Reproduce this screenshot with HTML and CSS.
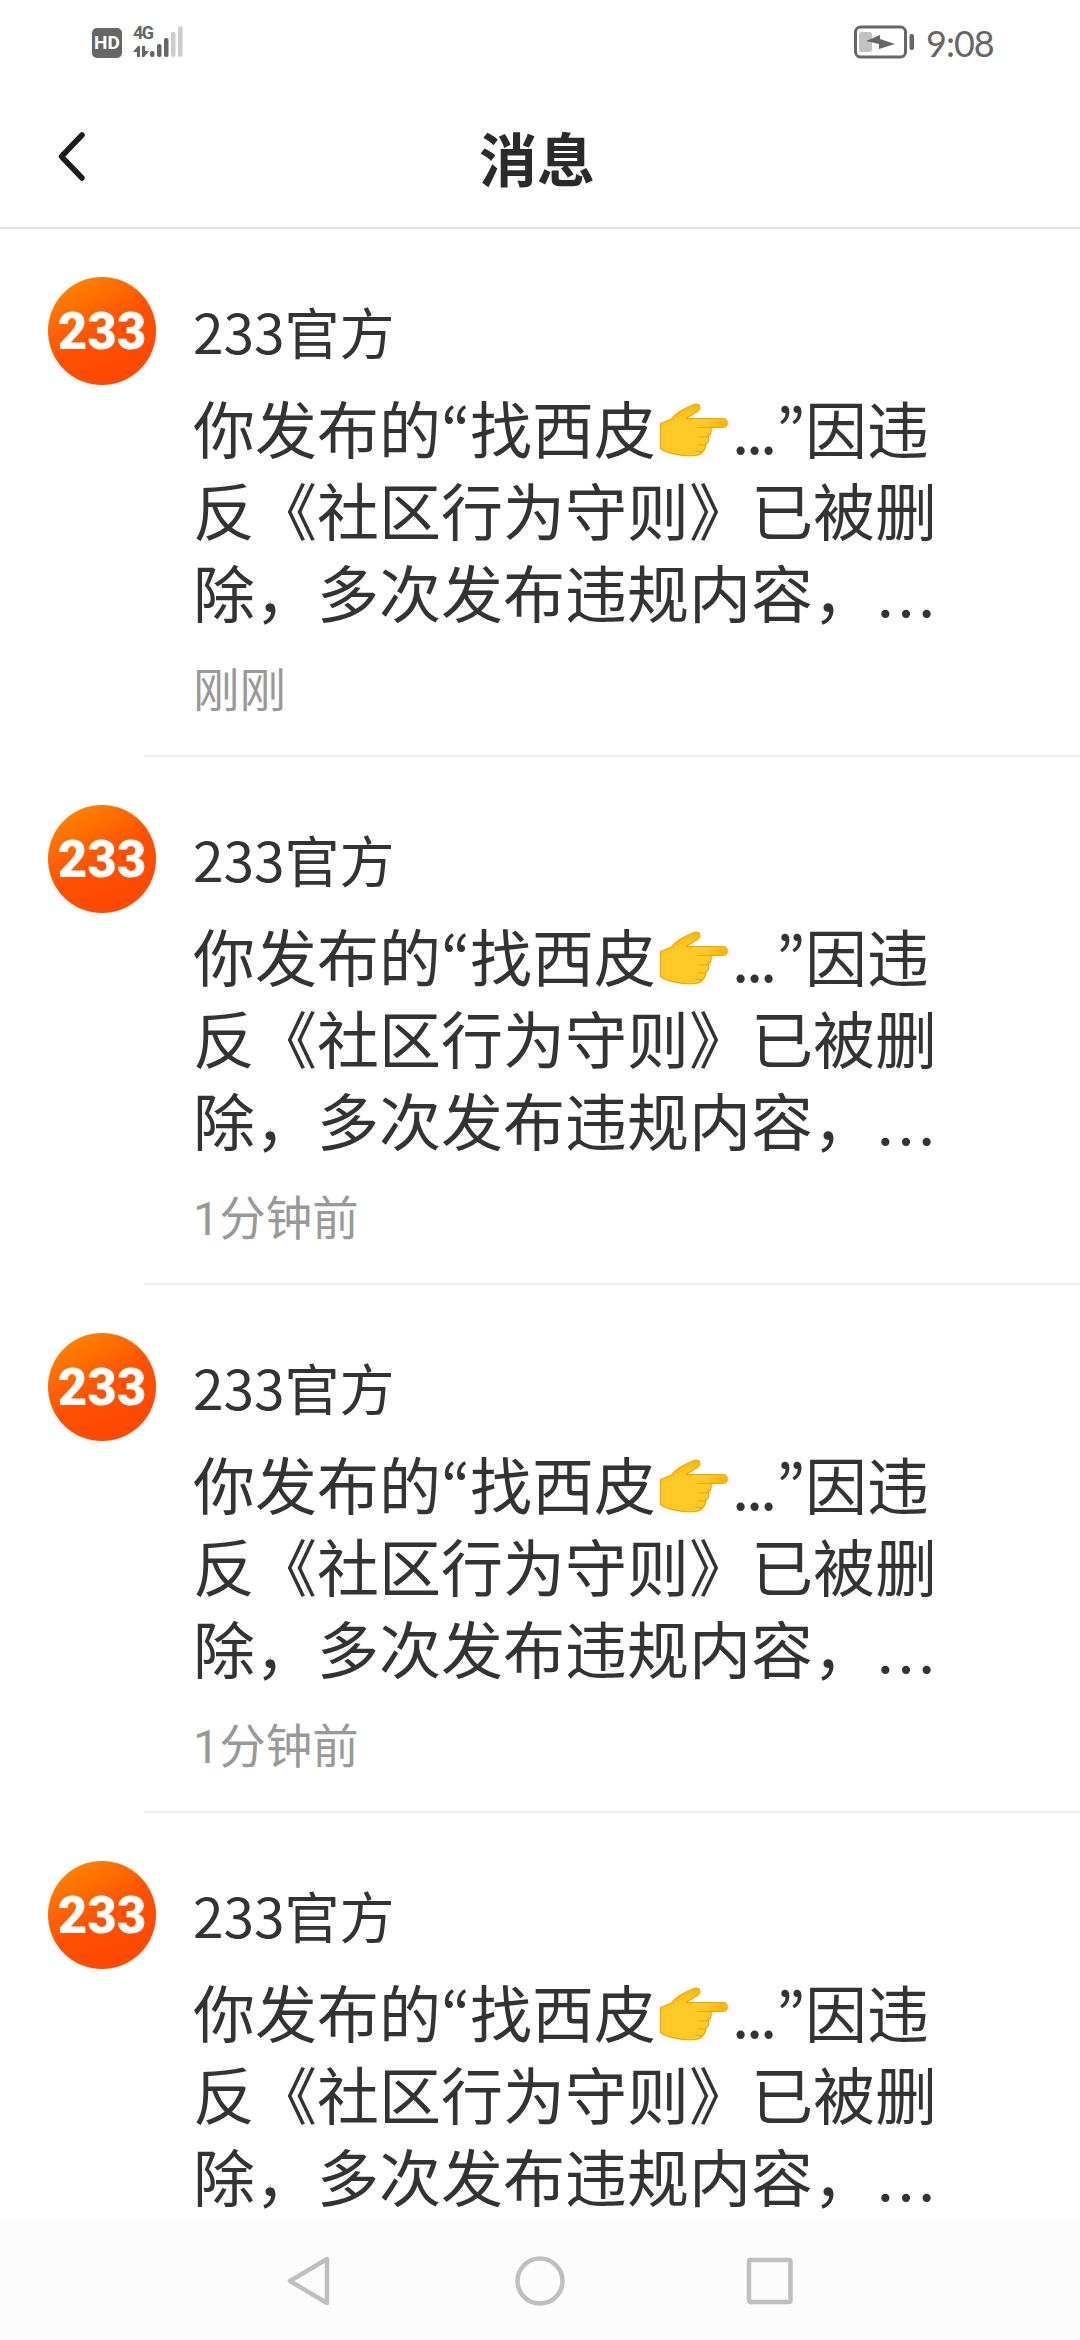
FILE: index.html
```html
<!DOCTYPE html>
<html lang="zh-CN">
<head>
<meta charset="utf-8">
<title>消息</title>
<link rel="stylesheet" href="styles.css">
</head>
<body>
<svg width="0" height="0" class="defs">
  <defs>
    <linearGradient id="skin" x1="0" y1="0" x2="0.3" y2="1"><stop offset="0" stop-color="#ffb300"/><stop offset="0.45" stop-color="#ffc928"/><stop offset="1" stop-color="#ffca28"/></linearGradient>
    <linearGradient id="finger" x1="0" y1="0" x2="1" y2="0"><stop offset="0.5" stop-color="#ffb300" stop-opacity="0"/><stop offset="1" stop-color="#ffb300"/></linearGradient>
    <symbol id="hand" viewBox="0 0 70 54">
      <path d="M1.5 20.5 L12 16.5 C18 9 27 4.500 36 1.300 C41 .2 42.500 6 38.500 8.500 L27 15.500 H63.500 C69.800 15.500 69.800 24.500 63.500 24.500 H52 C52.500 28 51.500 31.500 49.500 33 C50 37 48.500 40.500 46.500 41.500 C47 45 45 48 43.500 48.500 C42 52 39 52.500 35 52.500 C24 53.500 9 51 1.500 45.500 Z" fill="url(#skin)" stroke="#eda600" stroke-width="1.200" stroke-linejoin="round"/>
      <path d="M27 16.100 H63.500 C69 16.100 69 23.900 63.500 23.900 H40 Z" fill="url(#finger)"/>
      <path d="M40 24.500 H53 M40 33.500 Q46 35 50 32.500 M39 41.500 Q44 43 47 41 M37 48 Q41 49.500 44 48" fill="none" stroke="#eda600" stroke-width="1.200" stroke-linecap="round"/>
    </symbol>
  </defs>
</svg>
<div class="screen">
  <header class="status">
    <div class="status-left">
      <span class="hd">HD</span>
      <div class="signal">
        <span class="net">4G</span>
        <svg class="bars" width="52" height="34" viewBox="0 0 52 34">
          <g fill="#666"><path d="M0 27 L5 21 H7 V32 H4 V27 Z"/><path d="M9 21 H12 V26 H16 L11 32 H9 Z"/>
          <rect x="17" y="26" width="4.500" height="6" rx="2"/><rect x="24" y="19" width="4.500" height="13" rx="2"/><rect x="31" y="13" width="4.500" height="19" rx="2"/></g>
          <g fill="#ccc"><rect x="38" y="7" width="4.500" height="25" rx="2"/><rect x="45" y="1.500" width="4.500" height="30.500" rx="2"/></g>
        </svg>
      </div>
    </div>
    <div class="status-right">
      <svg width="61" height="34" viewBox="0 0 61 34">
        <rect x="1.500" y="2" width="50" height="30" rx="5" fill="none" stroke="#666" stroke-width="3"/>
        <rect x="5" y="7" width="13" height="20" rx="2.500" fill="#c2c2c2"/>
        <path d="M12 16 L26 10 V14 L41 19 L25 24 V19 Z" fill="#666"/>
        <rect x="55.500" y="9" width="4.500" height="16" rx="2" fill="#666"/>
      </svg>
      <span class="clock">9:08</span>
    </div>
  </header>
  <nav class="titlebar">
    <svg class="back" width="32" height="54" viewBox="0 0 32 54"><path d="M26 4 L5.500 25.500 L26 47" fill="none" stroke="#1c1c1c" stroke-width="5.500" stroke-linecap="round" stroke-linejoin="round"/></svg>
    <h1 class="title">消息</h1>
  </nav>
  <main class="list">
    <article class="item">
      <div class="avatar"><span class="logo">233</span></div>
      <div class="content">
        <div class="name">233官方</div>
        <p class="body">你发布的<span class="quote">“</span>找西皮<svg class="emoji" role="img" aria-label="👉"><use href="#hand"/></svg><span class="dots">...</span><span class="quote">”</span>因违<br>反《社区行为守则》已被删<br>除，多次发布违规内容，<span class="more">…</span></p>
        <time class="time">刚刚</time>
      </div>
    </article>
    <article class="item">
      <div class="avatar"><span class="logo">233</span></div>
      <div class="content">
        <div class="name">233官方</div>
        <p class="body">你发布的<span class="quote">“</span>找西皮<svg class="emoji" role="img" aria-label="👉"><use href="#hand"/></svg><span class="dots">...</span><span class="quote">”</span>因违<br>反《社区行为守则》已被删<br>除，多次发布违规内容，<span class="more">…</span></p>
        <time class="time"><span class="num">1</span>分钟前</time>
      </div>
    </article>
    <article class="item">
      <div class="avatar"><span class="logo">233</span></div>
      <div class="content">
        <div class="name">233官方</div>
        <p class="body">你发布的<span class="quote">“</span>找西皮<svg class="emoji" role="img" aria-label="👉"><use href="#hand"/></svg><span class="dots">...</span><span class="quote">”</span>因违<br>反《社区行为守则》已被删<br>除，多次发布违规内容，<span class="more">…</span></p>
        <time class="time"><span class="num">1</span>分钟前</time>
      </div>
    </article>
    <article class="item">
      <div class="avatar"><span class="logo">233</span></div>
      <div class="content">
        <div class="name">233官方</div>
        <p class="body">你发布的<span class="quote">“</span>找西皮<svg class="emoji" role="img" aria-label="👉"><use href="#hand"/></svg><span class="dots">...</span><span class="quote">”</span>因违<br>反《社区行为守则》已被删<br>除，多次发布违规内容，<span class="more">…</span></p>
      </div>
    </article>
  </main>
  <footer class="navbar">
    <svg width="50" height="50" viewBox="0 0 50 50"><path d="M42 3 V47 L5 25 Z"/></svg>
    <svg width="50" height="50" viewBox="0 0 50 50"><circle cx="25" cy="25" r="22.500"/></svg>
    <svg width="50" height="50" viewBox="0 0 50 50"><rect x="4" y="4" width="41.500" height="42" rx="1.500"/></svg>
  </footer>
</div>
</body>
</html>
```
FILE: styles.css
```css
* { box-sizing: border-box; }
body { margin: 0; background: #fff; color: #333; font-family: "Noto Sans CJK SC", sans-serif; }
.defs { display: block; }
.screen { width: 1080px; height: 2340px; display: flex; flex-direction: column; overflow: hidden; }

.status { height: 86px; padding: 0 85px 0 92px; display: flex; justify-content: space-between; align-items: center; color: #666; flex: none; }
.status-left { display: flex; align-items: center; gap: 11px; }
.hd { width: 30px; height: 30px; border-radius: 5px; background: #666; color: #fff; font: 700 19px/30px Roboto, sans-serif; text-align: center; }
.signal { display: grid; margin-top: -2px; }
.signal > * { grid-area: 1 / 1; }
.net { font: 700 18px/15px Roboto, sans-serif; letter-spacing: -1.500px; align-self: start; }
.status-right { display: flex; align-items: center; gap: 11px; margin-top: -2px; }
.clock { font: 400 36px/40px Lato, sans-serif; width: 69px; letter-spacing: -1px; padding-top: 1px; }

.titlebar { height: 143px; flex: none; display: grid; grid-template-columns: 1fr auto 1fr; align-items: center; padding: 2px 56px 0 56px; border-bottom: 2px solid #e2e2e2; }
.title { margin: 0 0 2px -6px; font-size: 58px; line-height: 80px; font-weight: 700; color: #2a2a2a; }

.list { flex: 1; min-height: 0; }
.item { height: 528px; padding: 48px 0 0 48px; display: flex; gap: 37px; background: linear-gradient(#ececec, #ececec) 144px 100% / 936px 2px no-repeat; }
.avatar { width: 108px; height: 108px; flex: none; border-radius: 50%; background: linear-gradient(150deg, #ff9000 0%, #ff5000 52%, #ff4600 100%); display: flex; align-items: center; justify-content: center; }
.logo { color: #fff; font: 900 51px/50px Roboto, sans-serif; padding-top: 1px; }
.content { padding-top: 13px; white-space: nowrap; }
.name { font-size: 55px; line-height: 80px; }
.body { margin: 16px 0 0; font-size: 62px; line-height: 82px; }
.quote { font-family: "Noto Sans CJK KR", sans-serif; display: inline-block; width: 29px; line-height: 1; text-align: center; }
.emoji { width: 70px; height: 54px; margin: 0 3px; vertical-align: -3px; }
.dots { display: inline-block; width: 44px; line-height: 1; letter-spacing: -3.200px; font-family: "Noto Sans CJK KR", sans-serif; }
.more { line-height: 0; vertical-align: -20px; }
.time { display: block; margin-top: 25px; font-size: 46.500px; line-height: 60px; color: #999; }
.num { font-family: Roboto, sans-serif; font-weight: 400; line-height: 1; }

.navbar { height: 119px; flex: none; background: #fcfcfc; display: flex; justify-content: center; align-items: center; gap: 180px; }
.navbar svg { fill: none; stroke: #bfbfbf; stroke-width: 4.500; stroke-linejoin: round; }
```
